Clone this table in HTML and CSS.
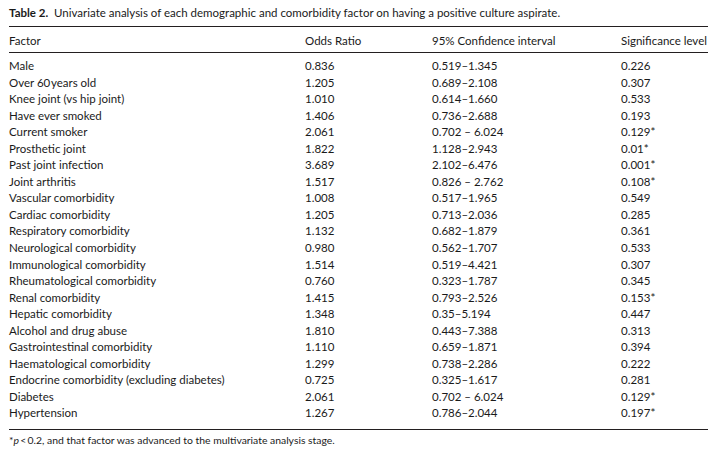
FILE: index.html
```html
<!DOCTYPE html>
<html lang="en">
<head>
<meta charset="utf-8">
<title>Table 2</title>
<link rel="stylesheet" href="styles.css">
</head>
<body>
<div class="sheet">
  <p class="caption"><span class="label">Table 2.</span>&nbsp; Univariate analysis of each demographic and comorbidity factor on having a positive culture aspirate.</p>
  <div class="data" role="table">
    <div class="head row" role="row"><span role="columnheader">Factor</span><span role="columnheader">Odds Ratio</span><span role="columnheader">95% Confidence interval</span><span role="columnheader">Significance level</span></div>
    <div class="body" role="rowgroup">
      <div class="row" role="row"><span>Male</span><span>0.836</span><span>0.519–1.345</span><span>0.226</span></div>
      <div class="row" role="row"><span>Over 60&#8202;years old</span><span>1.205</span><span>0.689–2.108</span><span>0.307</span></div>
      <div class="row" role="row"><span>Knee joint (vs hip joint)</span><span>1.010</span><span>0.614–1.660</span><span>0.533</span></div>
      <div class="row" role="row"><span>Have ever smoked</span><span>1.406</span><span>0.736–2.688</span><span>0.193</span></div>
      <div class="row" role="row"><span>Current smoker</span><span>2.061</span><span>0.702 – 6.024</span><span>0.129*</span></div>
      <div class="row" role="row"><span>Prosthetic joint</span><span>1.822</span><span>1.128–2.943</span><span>0.01*</span></div>
      <div class="row" role="row"><span>Past joint infection</span><span>3.689</span><span>2.102–6.476</span><span>0.001*</span></div>
      <div class="row" role="row"><span>Joint arthritis</span><span>1.517</span><span>0.826 – 2.762</span><span>0.108*</span></div>
      <div class="row" role="row"><span>Vascular comorbidity</span><span>1.008</span><span>0.517–1.965</span><span>0.549</span></div>
      <div class="row" role="row"><span>Cardiac comorbidity</span><span>1.205</span><span>0.713–2.036</span><span>0.285</span></div>
      <div class="row" role="row"><span>Respiratory comorbidity</span><span>1.132</span><span>0.682–1.879</span><span>0.361</span></div>
      <div class="row" role="row"><span>Neurological comorbidity</span><span>0.980</span><span>0.562–1.707</span><span>0.533</span></div>
      <div class="row" role="row"><span>Immunological comorbidity</span><span>1.514</span><span>0.519–4.421</span><span>0.307</span></div>
      <div class="row" role="row"><span>Rheumatological comorbidity</span><span>0.760</span><span>0.323–1.787</span><span>0.345</span></div>
      <div class="row" role="row"><span>Renal comorbidity</span><span>1.415</span><span>0.793–2.526</span><span>0.153*</span></div>
      <div class="row" role="row"><span>Hepatic comorbidity</span><span>1.348</span><span>0.35–5.194</span><span>0.447</span></div>
      <div class="row" role="row"><span>Alcohol and drug abuse</span><span>1.810</span><span>0.443–7.388</span><span>0.313</span></div>
      <div class="row" role="row"><span>Gastrointestinal comorbidity</span><span>1.110</span><span>0.659–1.871</span><span>0.394</span></div>
      <div class="row" role="row"><span>Haematological comorbidity</span><span>1.299</span><span>0.738–2.286</span><span>0.222</span></div>
      <div class="row" role="row"><span>Endocrine comorbidity (excluding diabetes)</span><span>0.725</span><span>0.325–1.617</span><span>0.281</span></div>
      <div class="row" role="row"><span>Diabetes</span><span>2.061</span><span>0.702 – 6.024</span><span>0.129*</span></div>
      <div class="row" role="row"><span>Hypertension</span><span>1.267</span><span>0.786–2.044</span><span>0.197*</span></div>
    </div>
  </div>
  <p class="note">*<i>p</i>&#8201;&lt;&#8201;0.2, and that factor was advanced to the multivariate analysis stage.</p>
</div>
</body>
</html>
```

FILE: styles.css
```css
html, body {
  margin: 0;
  padding: 0;
  background: #ffffff;
}

body {
  font-family: "Lato", "Open Sans", sans-serif;
  color: #1a1a1a;
}

.sheet {
  width: 699px;
  margin-left: 9px;
}

.caption {
  margin: 0;
  padding-top: 5.5px;
  height: 20.5px;
  font-size: 11.5px;
  line-height: 14px;
  white-space: nowrap;
  border-bottom: 1px solid #231f20;
}

.caption .label {
  font-weight: 700;
}

.data {
  font-size: 11.5px;
}

.row {
  display: grid;
  grid-template-columns: 296px 127px 189px 87px;
  line-height: 16.55px;
  white-space: nowrap;
}

.head {
  line-height: 14px;
  padding: 6.5px 0 4.5px 0;
  border-bottom: 1px solid #231f20;
}

.body {
  padding: 5px 0 6.8px 0;
  border-bottom: 1px solid #231f20;
}

.note {
  margin: 0;
  padding-top: 3px;
  font-size: 10.4px;
  line-height: 14px;
}
```
